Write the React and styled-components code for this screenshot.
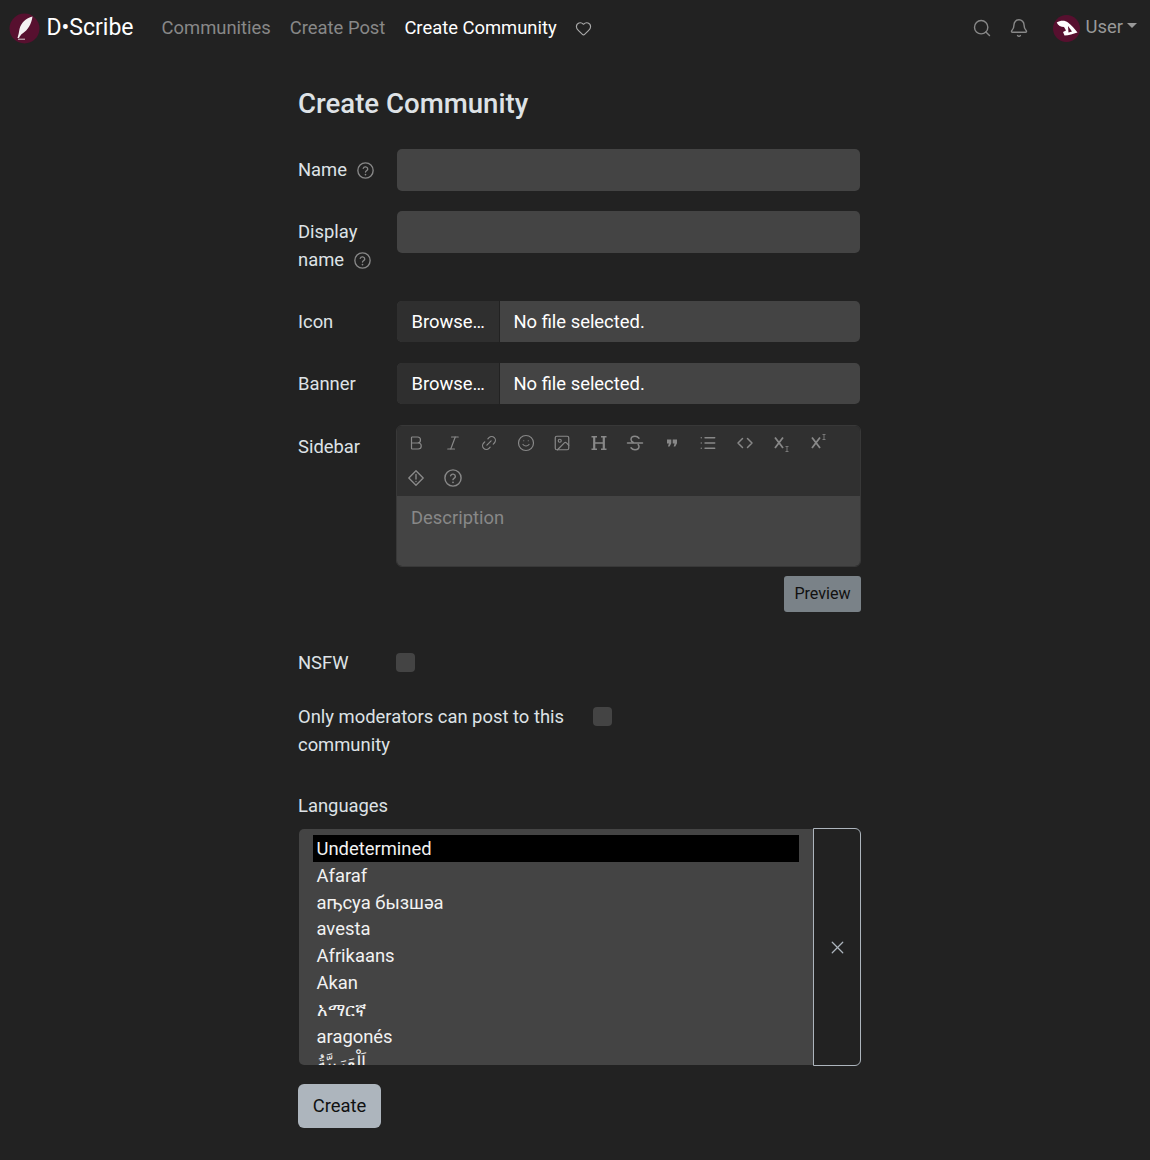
import React from "react";
import styled, { createGlobalStyle } from "styled-components";
import {
  Bold,
  Italic,
  Link2,
  Smile,
  Image as ImageIcon,
  List,
  Search,
  Bell,
  Heart,
  X,
} from "lucide-react";

const GlobalStyle = createGlobalStyle`
  html, body { margin: 0; padding: 0; background: #222; }
  body {
    font-family: Roboto, sans-serif;
    font-size: 18.4px;
    line-height: 27.6px;
    color: #dee2e6;
  }
  * { box-sizing: border-box; }
`;

const Navbar = styled.nav`
  display: flex;
  align-items: center;
  height: 56px;
  padding: 0 13px 0 9px;
`;
const Brand = styled.a`
  display: flex;
  align-items: center;
  gap: 6.5px;
  font-size: 23px;
  color: #fff;
  margin-right: 28px;
`;
const NavLinks = styled.div`
  display: flex;
  align-items: center;
  gap: 19px;
  flex: 1;
`;
const NavLink = styled.a`
  color: ${(p) => (p.$active ? "#fff" : "#888")};
`;
const NavRight = styled.div`
  display: flex;
  align-items: center;
`;
const NavIcon = styled.span`
  display: flex;
  color: #888;
  margin-right: ${(p) => p.$gap}px;
`;
const HeartLink = styled.span`
  display: flex;
  color: #aaa;
  margin-left: -1px;
`;
const UserName = styled.span`
  color: #999;
  margin: 0 0 2px 6px;
`;
const Caret = styled.span`
  width: 0;
  height: 0;
  margin: 0 0 5px 4px;
  border-left: 5px solid transparent;
  border-right: 5px solid transparent;
  border-top: 5px solid #999;
`;

const Main = styled.main`
  width: 563px;
  margin-left: 298px;
`;
const Title = styled.h1`
  margin: 0;
  padding-top: 29px;
  height: 93px;
  font-size: 27.6px;
  line-height: 38px;
  font-weight: 500;
`;
const Row = styled.div`
  display: grid;
  grid-template-columns: 99px 463px;
  margin-bottom: 20.4px;
`;
const Label = styled.label`
  padding: 7.3px 0 6.9px;
  display: block;
`;
const Help = styled.span`
  display: inline-flex;
  vertical-align: -3px;
  margin-left: 10px;
  color: #888;
`;
const TextInput = styled.input`
  display: block;
  width: 100%;
  height: 41.6px;
  border: 0;
  border-radius: 5px;
  background: #444;
`;
const FileBox = styled.div`
  display: flex;
  height: 41px;
  margin-bottom: 0.6px;
  border-radius: 5px;
  overflow: hidden;
  background: #444;
  color: #fff;
  align-items: center;
`;
const BrowseButton = styled.span`
  display: flex;
  align-items: center;
  width: 103px;
  height: 100%;
  padding-left: 14.5px;
  background: #2f2f2f;
  border-right: 1px solid #222;
`;
const FileName = styled.span`
  padding-left: 13.5px;
`;
const Editor = styled.div`
  width: 465px;
  margin-left: -1px;
  border: 1px solid #383838;
  border-radius: 6px;
  overflow: hidden;
`;
const Toolbar = styled.div`
  display: flex;
  flex-wrap: wrap;
  background: #303030;
  height: 70px;
  padding-left: 1px;
`;
const ToolButton = styled.span`
  display: flex;
  align-items: center;
  justify-content: center;
  width: 36.5px;
  height: 35px;
  padding-bottom: 1px;
  color: #888;
`;
const Description = styled.div`
  height: 70px;
  background: #444;
  color: #888;
  padding: 8px 14px;
`;
const PreviewRow = styled.div`
  display: flex;
  justify-content: flex-end;
  width: 465px;
  margin: 9px 0 0 -1px;
`;
const PreviewButton = styled.button`
  height: 36px;
  width: 77px;
  border: 0;
  border-radius: 3px;
  padding: 0 0 2px;
  background: #7a8288;
  color: #111;
  font: 16.1px Roboto, sans-serif;
`;
const CheckRow = styled.div`
  display: flex;
  align-items: flex-start;
  margin-top: ${(p) => p.$top}px;
`;
const CheckLabel = styled.div`
  width: ${(p) => p.$width}px;
`;
const Check = styled.span`
  display: block;
  width: 19px;
  height: 19px;
  margin-top: ${(p) => p.$top}px;
  border-radius: 4px;
  background: #444;
`;
const LangLabel = styled.div`
  margin-top: 33.8px;
`;
const LangBox = styled.div`
  display: flex;
  margin-top: 8.2px;
  height: 238px;
`;
const LangList = styled.div`
  width: 515px;
  height: 236px;
  margin: 1px 0 0 1px;
  padding: 6px 14px;
  background: #444;
  border-radius: 5px 0 0 5px;
  overflow: hidden;
`;
const LangItem = styled.div`
  height: 26.8px;
  line-height: 27px;
  padding-left: 3.5px;
  color: #f2f2f2;
  white-space: nowrap;
  background: ${(p) => (p.$selected ? "#000" : "transparent")};
`;
const ClearButton = styled.button`
  display: flex;
  align-items: center;
  justify-content: center;
  width: 48px;
  height: 238px;
  padding: 0;
  background: transparent;
  color: #adb5bd;
  border: 1px solid #adb5bd;
  border-radius: 0 6px 6px 0;
`;
const CreateButton = styled.button`
  display: block;
  margin-top: 18px;
  width: 83px;
  height: 44px;
  border: 0;
  border-radius: 6px;
  padding: 0 0 2px;
  background: #adb5bd;
  color: #111;
  font: 18.4px Roboto, sans-serif;
`;

const strokeProps = {
  fill: "none",
  stroke: "currentColor",
  strokeLinecap: "round",
  strokeLinejoin: "round",
};

const HelpIcon = ({ size = 17 }) => (
  <svg width={size} height={size} viewBox="0 0 24 24" {...strokeProps} strokeWidth={1.9}>
    <circle cx="12" cy="12" r="10.8" />
    <path d="M8.8 9a3.3 3.3 0 0 1 6.4 1c0 2.200-3.200 2.600-3.200 4.200" />
    <path d="M12 17.800h.01" strokeWidth={2.4} />
  </svg>
);

const Logo = () => (
  <svg width="31" height="31" viewBox="0 0 31 31">
    <circle cx="15.5" cy="15.5" r="15" fill="#57102f" />
    <path d="M23.500 3.500C17 5 12 10 10.500 16c-.5 3-1 6-2 9H10c1-2 2-3.500 3.500-4.500C19 17 22.500 11 23.500 3.500z" fill="#f4f1f2" />
    <path d="M9 26.200h7" stroke="#d8cbd1" strokeWidth="1" />
  </svg>
);

const Avatar = () => (
  <svg width="27" height="27" viewBox="0 0 27 27">
    <circle cx="13.500" cy="13.500" r="13.500" fill="#57102f" />
    <path d="M3.700 7.500C7 5.500 12 5 15 7.500c3.500 3 7 6.500 9.500 10-4.500 1.500-8.500 3-13 3L10 17l3-1.500-2-3.500C8 12 5 10.500 3.700 7.500z" fill="#fff" />
    <path d="M15 11l4 5.500-3.500 1z" fill="#57102f" />
  </svg>
);

const HeaderIcon = () => (
  <svg width="18" height="18" viewBox="0 0 18 18" fill="none" stroke="currentColor">
    <path d="M1.500 2.700h5.500M1.500 15.300h5.500M11 2.700h5.500M11 15.300h5.500" strokeWidth="1.400" />
    <path d="M4.200 2.700v12.600M13.800 2.700v12.600" strokeWidth="2.200" />
    <path d="M4.200 9h9.600" strokeWidth="1.500" />
  </svg>
);

const StrikeIcon = () => (
  <svg width="18" height="18" viewBox="0 0 18 18" {...strokeProps} strokeWidth={1.500}>
    <path d="M13 4.200C12 2.800 10.500 2.200 9 2.200c-2.200 0-4 1.200-4 3.200 0 1.400 1 2.400 2.300 3.100" />
    <path d="M5 13.800c1 1.400 2.500 2 4 2 2.200 0 4-1.200 4-3.200 0-.8-.3-1.500-.8-2" />
    <path d="M1.500 9h15" />
  </svg>
);

const QuoteIcon = () => (
  <svg width="16" height="16" viewBox="0 0 16 16" fill="currentColor">
    <path d="M3 4.500h4.300v3.700L5.600 11.500H3.900l1-3H3zM8.700 4.500H13v3.700l-1.700 3.300H9.600l1-3H8.700z" />
  </svg>
);

const CodeIcon = () => (
  <svg width="18" height="18" viewBox="0 0 18 18" {...strokeProps} strokeWidth={1.500}>
    <path d="M6.500 4.500 2 9l4.500 4.500M11.500 4.500 16 9l-4.500 4.500" />
  </svg>
);

const ScriptIcon = ({ up }) => (
  <svg width="18" height="18" viewBox="0 0 18 18" fill="none" stroke="currentColor">
    <path d="M3 3.500l8 10.500M11 3.500 3 14" strokeWidth="1.800" />
    <path
      d={up ? "M13.500 .5h3M15 .5v5M13.500 5.500h3" : "M13.500 12.500h3M15 12.500v5M13.500 17.500h3"}
      strokeWidth="0.800"
    />
  </svg>
);

const SpoilerIcon = () => (
  <svg width="18" height="18" viewBox="0 0 18 18" {...strokeProps} strokeWidth={1.400}>
    <path d="M9 1.800 16.200 9 9 16.200 1.800 9z" />
    <path d="M9 5.500v4.500M9 12.500h.01" />
  </svg>
);

const tools = [
  <Bold size={18} strokeWidth={1.6} key="b" />,
  <Italic size={18} strokeWidth={1.6} key="i" />,
  <Link2 size={18} strokeWidth={1.6} key="l" style={{ transform: "rotate(-45deg)" }} />,
  <Smile size={18} strokeWidth={1.6} key="s" />,
  <ImageIcon size={18} strokeWidth={1.6} key="im" />,
  <HeaderIcon key="h" />,
  <StrikeIcon key="st" />,
  <QuoteIcon key="q" />,
  <List size={18} strokeWidth={1.8} key="li" />,
  <CodeIcon key="c" />,
  <ScriptIcon key="sub" />,
  <ScriptIcon up key="sup" />,
  <SpoilerIcon key="sp" />,
  <HelpIcon size={18} key="he" />,
];

const languages = [
  "Undetermined",
  "Afaraf",
  "аҧсуа бызшәа",
  "avesta",
  "Afrikaans",
  "Akan",
  "አማርኛ",
  "aragonés",
  "اَلْعَرَبِيَّةُ",
];

export default function App() {
  return (
    <>
      <GlobalStyle />
      <Navbar>
        <Brand>
          <Logo />
          D•Scribe
        </Brand>
        <NavLinks>
          <NavLink>Communities</NavLink>
          <NavLink>Create Post</NavLink>
          <NavLink $active>Create Community</NavLink>
          <HeartLink>
            <Heart size={17} strokeWidth={1.6} />
          </HeartLink>
        </NavLinks>
        <NavRight>
          <NavIcon $gap={17}>
            <Search size={20} strokeWidth={1.7} />
          </NavIcon>
          <NavIcon $gap={24}>
            <Bell size={20} strokeWidth={1.7} />
          </NavIcon>
          <Avatar />
          <UserName>User</UserName>
          <Caret />
        </NavRight>
      </Navbar>
      <Main>
        <Title>Create Community</Title>
        <Row>
          <Label>
            Name
            <Help>
              <HelpIcon />
            </Help>
          </Label>
          <TextInput />
        </Row>
        <Row>
          <Label>
            Display name
            <Help>
              <HelpIcon />
            </Help>
          </Label>
          <TextInput />
        </Row>
        <Row>
          <Label>Icon</Label>
          <FileBox>
            <BrowseButton>Browse…</BrowseButton>
            <FileName>No file selected.</FileName>
          </FileBox>
        </Row>
        <Row>
          <Label>Banner</Label>
          <FileBox>
            <BrowseButton>Browse…</BrowseButton>
            <FileName>No file selected.</FileName>
          </FileBox>
        </Row>
        <Row>
          <Label>Sidebar</Label>
          <div>
            <Editor>
              <Toolbar>
                {tools.map((t, i) => (
                  <ToolButton key={i}>{t}</ToolButton>
                ))}
              </Toolbar>
              <Description>Description</Description>
            </Editor>
            <PreviewRow>
              <PreviewButton>Preview</PreviewButton>
            </PreviewRow>
          </div>
        </Row>
        <CheckRow $top={37}>
          <CheckLabel $width={98}>NSFW</CheckLabel>
          <Check $top={4} />
        </CheckRow>
        <CheckRow $top={26.4}>
          <CheckLabel $width={295}>
            Only moderators can post to this community
          </CheckLabel>
          <Check $top={4} />
        </CheckRow>
        <LangLabel>Languages</LangLabel>
        <LangBox>
          <LangList>
            {languages.map((l, i) => (
              <LangItem key={l} $selected={i === 0}>
                {l}
              </LangItem>
            ))}
          </LangList>
          <ClearButton>
            <X size={21} strokeWidth={1.4} />
          </ClearButton>
        </LangBox>
        <CreateButton>Create</CreateButton>
      </Main>
    </>
  );
}
